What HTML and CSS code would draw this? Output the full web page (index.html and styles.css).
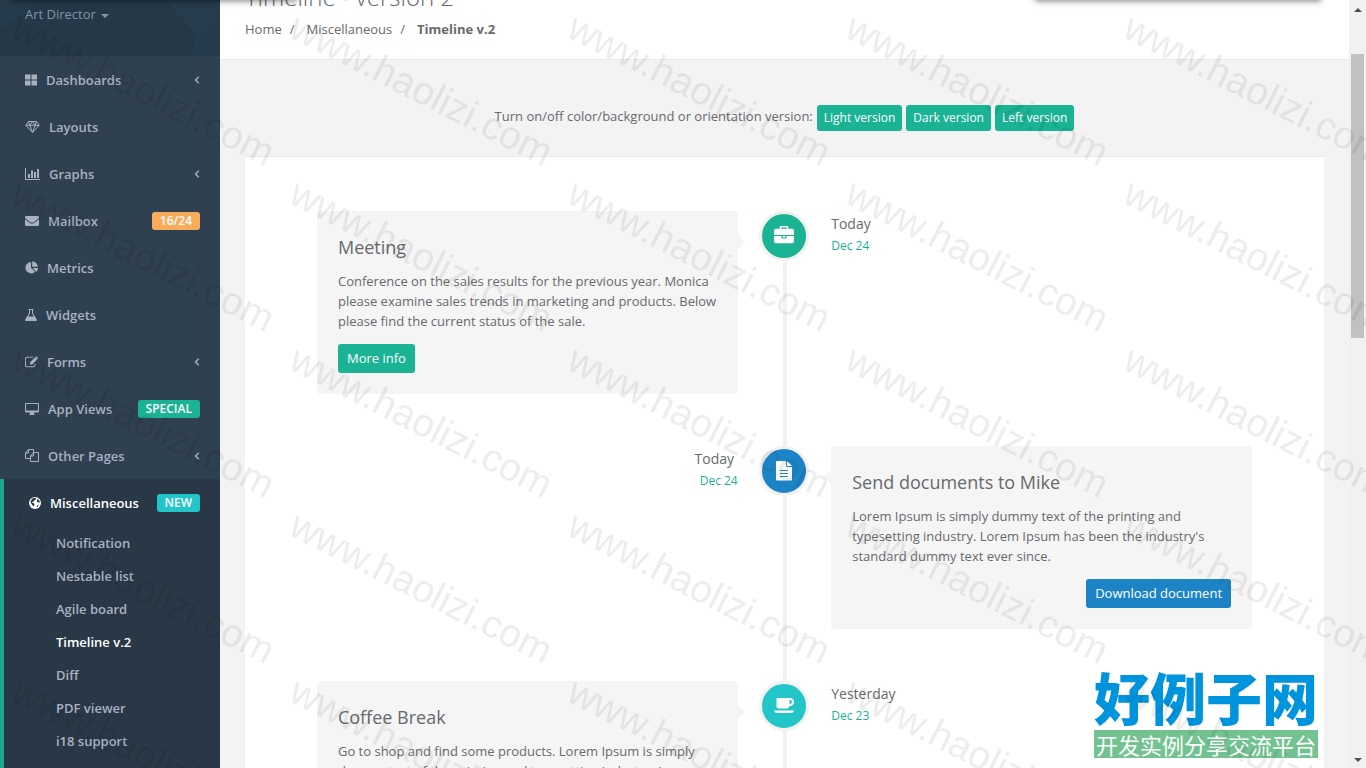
FILE: index.html
```html
<!DOCTYPE html>
<html lang="en">
<head>
    <meta charset="UTF-8">
    <meta name="viewport" content="width=device-width, initial-scale=1.0">
    <title>Timeline v.2</title>
    <link rel="stylesheet" href="styles.css">
</head>
<body>
    <div class="app">
        <nav class="sidebar">
            <div class="profile">
                <svg class="profile-pattern" viewBox="0 0 220 57" preserveAspectRatio="none" aria-hidden="true">
                    <path d="M165 0L195 33L220 8V0z" fill="#2c4455" opacity=".4"/>
                    <path d="M195 33L220 8V57H192z" fill="#2a4252" opacity=".4"/>
                    <path d="M0 30L40 0H0z" fill="#2a4252" opacity=".3"/>
                </svg>
                <a href="#" class="role">Art Director <span class="caret"></span></a>
            </div>
            <ul class="menu">
                <li><a href="#">
                    <svg class="icon" width="12" height="12" viewBox="0 0 12 12"><path d="M.5 .5h5v5H0V1zM6.500 .5h5l.5.5v4.500H6.500zM0 6.500h5.500v5H.5L0 11zM6.500 6.500H12V11l-.5.5h-5z"/></svg>
                    Dashboards
                    <svg class="arrow" width="6" height="8" viewBox="0 0 6 8"><path d="M4.800 .8L1.500 4l3.300 3.200"/></svg>
                </a></li>
                <li><a href="#">
                    <svg class="icon line" width="15" height="14" viewBox="0 0 15 14"><path d="M3.500 1.500h8l2.700 3.800L7.500 12.500.8 5.300zM.8 5.300h13.400M4.800 5.300l2.700 7 2.700-7M3.500 1.500l1.300 3.800 2.700-3.800 2.700 3.800 1.300-3.800"/></svg>
                    Layouts
                </a></li>
                <li><a href="#">
                    <svg class="icon" width="15" height="12" viewBox="0 0 15 12"><path d="M0 0h1v11h14v1H0zM3 6h2v4H3zM6 2.500h2V10H6zM9 4h2v6H9zM12 1h2v9h-2z"/></svg>
                    Graphs
                    <svg class="arrow" width="6" height="8" viewBox="0 0 6 8"><path d="M4.800 .8L1.500 4l3.300 3.200"/></svg>
                </a></li>
                <li><a href="#">
                    <svg class="icon" width="14" height="12" viewBox="0 0 14 12"><path d="M1.200 1h11.600q1.200 0 1.200 1.200Q13.700 3.500 12 4.700L8.200 7.400Q7 8.200 5.800 7.400L2 4.700Q.2 3.400 0 2.200 0 1 1.200 1zM0 4.300l5 3.600q2 1.400 4 0l5-3.600v5.500q0 1.200-1.200 1.200H1.200Q0 11 0 9.800z"/></svg>
                    Mailbox
                    <span class="badge orange">16/24</span>
                </a></li>
                <li><a href="#">
                    <svg class="icon" width="13" height="13" viewBox="0 0 13 13"><path d="M6 1v5.700l4.100 4.100A5.700 5.700 0 1 1 6 1zM7.200.3A5.500 5.500 0 0 1 12.700 5.800H7.200zM7.500 7H13a5.600 5.600 0 0 1-1.600 3.900z"/></svg>
                    Metrics
                </a></li>
                <li><a href="#">
                    <svg class="icon" width="12" height="12" viewBox="0 0 12 12"><path fill-rule="evenodd" d="M3.500 0h5v1H8v3.200l3.700 6q.7 1.800-.9 1.800H1.200Q-.4 12 .3 10.200L4 4.200V1h-.5zM5 1v3.500L3.200 7.400h5.600L7 4.500V1z"/></svg>
                    Widgets
                </a></li>
                <li><a href="#">
                    <svg class="icon" width="13" height="12" viewBox="0 0 13 12"><path d="M8.500.8H2Q0 .8 0 2.800v6.400q0 2 2 2h6.400q2 0 2-2V7.500l-1 1v.7q0 1-1 1H2q-1 0-1-1V2.800q0-1 1-1h5.500zM5 6.200L10.300 1l2.200 2.100-5.300 5.300H5zM10.800.5q.6-.6 1.200 0l.9.9q.6.6 0 1.200l-.2.2L10.600.7z"/></svg>
                    Forms
                    <svg class="arrow" width="6" height="8" viewBox="0 0 6 8"><path d="M4.800 .8L1.500 4l3.300 3.200"/></svg>
                </a></li>
                <li><a href="#">
                    <svg class="icon" width="14" height="12" viewBox="0 0 14 12"><path fill-rule="evenodd" d="M1 0h12q1 0 1 1v7.500q0 1-1 1H9q0 .8.500 1.500v1h-5v-1q.5-.7.500-1.500H1q-1 0-1-1V1q0-1 1-1zM1 1v6.500h12V1z"/></svg>
                    App Views
                    <span class="badge green">SPECIAL</span>
                </a></li>
                <li><a href="#">
                    <svg class="icon line" width="14" height="13" viewBox="0 0 14 13"><path d="M5.500 9.500h-5V4l3-3.500h5v3M3.500.5V4h-3M8.500 3.500h5v9h-8V7zM8.500 3.500V7h-3"/></svg>
                    Other Pages
                    <svg class="arrow" width="6" height="8" viewBox="0 0 6 8"><path d="M4.800 .8L1.500 4l3.300 3.200"/></svg>
                </a></li>
                <li class="active"><a href="#">
                    <svg class="icon" width="12" height="12" viewBox="0 0 12 12"><circle cx="6" cy="6" r="6"/><path fill="#293846" d="M3.800 1.200l2.400-.5 1 .7-.5 1.200-1.300.6-.3 1.200-1.300.2-.8 1.200 1.600.3 1 1.300-.3 1.200-1.200.8L3 7.500 1.600 5.600l.3-2.200zM8 2.200l1.800.5 1 2.100-.3.900-1.600-.3-1-1.200zM8.300 8.200l1.400-.7-.8 2.100-1.300 1z"/></svg>
                    Miscellaneous
                    <span class="badge cyan">NEW</span>
                </a>
                    <ul class="submenu">
                        <li><a href="#">Notification</a></li>
                        <li><a href="#">Nestable list</a></li>
                        <li><a href="#">Agile board</a></li>
                        <li><a href="#" class="current">Timeline v.2</a></li>
                        <li><a href="#">Diff</a></li>
                        <li><a href="#">PDF viewer</a></li>
                        <li><a href="#">i18 support</a></li>
                    </ul>
                </li>
            </ul>
        </nav>

        <main class="page">
            <header class="page-heading">
                <h1>Timeline - version 2</h1>
                <ol class="breadcrumb">
                    <li><a href="#">Home</a></li>
                    <li><a href="#">Miscellaneous</a></li>
                    <li><strong>Timeline v.2</strong></li>
                </ol>
            </header>

            <div class="wrapper">
                <div class="versions">
                    <span>Turn on/off color/background or orientation version:</span>
                    <button type="button" class="btn btn-small green">Light version</button>
                    <button type="button" class="btn btn-small green">Dark version</button>
                    <button type="button" class="btn btn-small green">Left version</button>
                </div>

                <div class="panel">
                    <div class="timeline">
                        <section class="entry">
                            <div class="card">
                                <h2>Meeting</h2>
                                <p>Conference on the sales results for the previous year. Monica please examine sales trends in marketing and products. Below please find the current status of the sale.</p>
                                <button type="button" class="btn green">More info</button>
                            </div>
                            <div class="marker green">
                                <svg width="20" height="20" viewBox="0 0 1792 1792"><path d="M640 256h512v-128h-512v128zm1152 640v480q0 66-47 113t-113 47h-1472q-66 0-113-47t-47-113v-480h672v160q0 26 19 45t45 19h320q26 0 45-19t19-45v-160h672zm-768 0v128h-256v-128h256zm768-480v384h-1792v-384q0-66 47-113t113-47h352v-160q0-40 28-68t68-28h576q40 0 68 28t28 68v160h352q66 0 113 47t47 113z"/></svg>
                            </div>
                            <div class="date">Today<small>Dec 24</small></div>
                        </section>

                        <section class="entry reverse">
                            <div class="card">
                                <h2>Send documents to Mike</h2>
                                <p>Lorem Ipsum is simply dummy text of the printing and typesetting industry. Lorem Ipsum has been the industry's standard dummy text ever since.</p>
                                <button type="button" class="btn blue">Download document</button>
                            </div>
                            <div class="marker blue">
                                <svg width="18" height="20" viewBox="0 0 18 20"><path fill-rule="evenodd" d="M2 0h9v5q0 1 1 1h5v12.500q0 1-1 1H2q-1 0-1-1V1q0-1 1-1zM5 9v1h8V9zM5 12v1h8v-1zM5 15v1h8v-1zM12 0l5 5h-5z"/></svg>
                            </div>
                            <div class="date">Today&nbsp;<small>Dec 24</small></div>
                        </section>

                        <section class="entry">
                            <div class="card">
                                <h2>Coffee Break</h2>
                                <p>Go to shop and find some products. Lorem Ipsum is simply dummy text of the printing and typesetting industry. Lorem Ipsum has been the industry's.</p>
                                <button type="button" class="btn cyan">Read more</button>
                            </div>
                            <div class="marker cyan">
                                <svg width="20" height="20" viewBox="0 0 20 20"><path fill-rule="evenodd" d="M3 2h13q4 .3 4 4t-4 4h-.5q-.3 2.500-2.500 2.500H5Q2.500 12.500 2.500 10V2.500zM15.500 4v4h.5q2 0 2-2t-2-2zM0 14.500h20q-.5 2.500-3 2.500H3q-2.500 0-3-2.500z"/></svg>
                            </div>
                            <div class="date">Yesterday<small>Dec 23</small></div>
                        </section>
                    </div>
                </div>
            </div>
        </main>

        <div class="scrollbar" aria-hidden="true">
            <span class="scroll-up"></span>
            <span class="thumb"></span>
            <span class="scroll-down"></span>
        </div>

        <div class="top-shadow left"></div>
        <div class="top-shadow right"></div>

        <div class="site-logo" lang="zh">
            <strong>好例子网</strong>
            <span>开发实例分享交流平台</span>
        </div>

        <svg class="watermark" aria-hidden="true">
            <defs>
                <pattern id="mark" x="7" y="10" width="278" height="166" patternUnits="userSpaceOnUse">
                    <text transform="translate(2 26) rotate(27)">www.haolizi.com</text>
                </pattern>
            </defs>
            <rect width="100%" height="100%" fill="url(#mark)"/>
        </svg>
    </div>
</body>
</html>
```
FILE: styles.css
```css
* {
    box-sizing: border-box;
}
body {
    margin: 0;
    font-family: "Open Sans", "Liberation Sans", sans-serif;
    font-size: 13px;
    line-height: 20px;
    color: #676a6c;
    background-color: #f3f3f4;
}
a {
    color: inherit;
    text-decoration: none;
}
ul, ol {
    list-style: none;
    margin: 0;
    padding: 0;
}
.app {
    position: relative;
    display: flex;
    height: 100vh;
    overflow: hidden;
}
.green {
    background-color: #1ab394;
}
.blue {
    background-color: #1c84c6;
}
.cyan {
    background-color: #23c6c8;
}
.orange {
    background-color: #f8ac59;
}

/* sidebar */
.sidebar {
    flex: 0 0 220px;
    background-color: #2f4050;
    color: #a7b1c2;
    font-weight: 600;
}
.profile {
    position: relative;
    height: 56px;
    padding: 4px 25px;
    background-color: #243848;
}
.profile-pattern {
    position: absolute;
    left: 0;
    top: 0;
    width: 100%;
    height: 100%;
}
.role {
    position: relative;
    color: #8095a8;
    font-weight: 400;
}
.caret {
    display: inline-block;
    margin-left: 2px;
    vertical-align: middle;
    border: 4px solid transparent;
    border-top-color: #8095a8;
    border-bottom: 0;
}
.menu > li > a {
    display: flex;
    align-items: center;
    height: 47px;
    padding: 0 20px 0 25px;
}
.icon {
    margin-right: 9px;
    fill: #a7b1c2;
}
.icon.line {
    fill: none;
    stroke: #a7b1c2;
}
.arrow {
    margin-left: auto;
    fill: none;
    stroke: #a7b1c2;
    stroke-width: 1.4;
}
.badge {
    margin-left: auto;
    padding: 0 8px;
    border-radius: 3px;
    color: #fff;
    font-size: 12px;
    line-height: 18px;
}
.menu > .active {
    border-left: 4px solid #19aa8d;
    background-color: #293846;
    height: 100vh;
}
.menu > .active > a {
    color: #fff;
}
.active .icon {
    fill: #fff;
}
.submenu {
    padding-top: 1px;
}
.submenu a {
    display: block;
    padding-left: 52px;
    line-height: 33px;
}
.submenu .current {
    color: #fff;
}

/* page */
.page {
    flex: 1;
    min-width: 0;
}
.page-heading {
    display: flow-root;
    height: 60px;
    padding: 0 25px;
    background-color: #fff;
    border-bottom: 1px solid #e7eaec;
}
.page-heading h1 {
    margin: -16px 0 9px;
    font-size: 24px;
    font-weight: 300;
    line-height: 26px;
}
.breadcrumb {
    display: flex;
}
.breadcrumb li + li::before {
    content: "/";
    padding: 0 12px 0 8px;
}
.wrapper {
    padding: 45px 25px 0;
}
.versions {
    display: flex;
    justify-content: center;
    gap: 4px;
    margin-bottom: 25px;
    line-height: 23px;
}
.btn {
    padding: 0 9px;
    border: 0;
    border-radius: 3px;
    color: #fff;
    font-family: inherit;
    font-size: 13px;
    font-weight: 500;
    line-height: 29px;
    cursor: pointer;
}
.btn-small {
    padding: 0 7px;
    font-size: 12px;
    line-height: 26px;
}
.panel {
    padding: 54px 20px;
    background-color: #fff;
    border-top: 1px solid #e7eaec;
}

/* timeline */
.timeline {
    position: relative;
    width: 90%;
    margin: 0 auto;
}
.timeline::before {
    content: "";
    position: absolute;
    top: 0;
    bottom: 0;
    left: 50%;
    width: 4px;
    margin-left: -2px;
    background-color: #f1f1f1;
}
.entry {
    display: grid;
    grid-template-columns: 45% 10% 45%;
    grid-template-areas: "card marker date";
    margin-bottom: 52px;
}
.entry.reverse {
    grid-template-areas: "date marker card";
}
.card {
    position: relative;
    grid-area: card;
    padding: 21px;
    border-radius: 4px;
    background-color: #f5f5f5;
}
.card::before {
    content: "";
    position: absolute;
    top: 24px;
    left: 100%;
    border: 7px solid transparent;
    border-left-color: #f5f5f5;
}
.reverse .card::before {
    left: auto;
    right: 100%;
    border-left-color: transparent;
    border-right-color: #f5f5f5;
}
.card h2 {
    margin: 0 0 9px;
    font-size: 18px;
    font-weight: 400;
    line-height: 30px;
}
.card p {
    margin: 0 0 13px;
}
.card .btn {
    display: block;
}
.reverse .btn {
    margin-left: auto;
}
.marker {
    position: relative;
    grid-area: marker;
    justify-self: center;
    display: flex;
    align-items: center;
    justify-content: center;
    width: 50px;
    height: 50px;
    border: 3px solid #f1f1f1;
    border-radius: 50%;
}
.marker svg {
    fill: #fff;
}
.date {
    grid-area: date;
    padding-top: 2px;
    font-size: 14px;
    line-height: 22px;
}
.reverse .date {
    text-align: right;
}
.date small {
    display: block;
    color: #1ab394;
    font-size: 12px;
}

/* scrollbar */
.scrollbar {
    flex: 0 0 17px;
    display: flex;
    flex-direction: column;
    align-items: center;
    padding: 8px 0 6px;
    background-color: #f1f1f1;
}
.scroll-up, .scroll-down {
    border: 4px solid transparent;
}
.scroll-up {
    border-top: 0;
    border-bottom-color: #505050;
}
.scroll-down {
    margin-top: auto;
    border-bottom: 0;
    border-top-color: #505050;
}
.thumb {
    width: 13px;
    height: 284px;
    margin-top: 42px;
    background-color: #c1c1c1;
}

/* overlays */
.top-shadow {
    position: absolute;
    top: -20px;
    width: 284px;
    height: 20px;
    box-shadow: 0 0 6px 1px rgba(0, 0, 0, 0.5);
}
.top-shadow.left {
    left: 12px;
    width: 284px;
}
.top-shadow.right {
    right: 46px;
}
.site-logo {
    position: absolute;
    right: 48px;
    bottom: 10px;
    font-family: "Noto Sans CJK SC", sans-serif;
}
.site-logo strong {
    display: block;
    margin-bottom: 4px;
    color: #0094de;
    font-size: 56px;
    font-weight: 900;
    line-height: 60px;
}
.site-logo span {
    display: block;
    padding: 0 2px;
    background-color: #72c391;
    color: #fff;
    font-size: 22px;
    line-height: 28px;
}
.watermark {
    position: absolute;
    left: 0;
    top: 0;
    width: 100%;
    height: 100%;
    pointer-events: none;
}
.watermark text {
    font-family: "Liberation Sans", sans-serif;
    font-size: 39px;
    fill: #000;
    fill-opacity: 0.07;
}
```
